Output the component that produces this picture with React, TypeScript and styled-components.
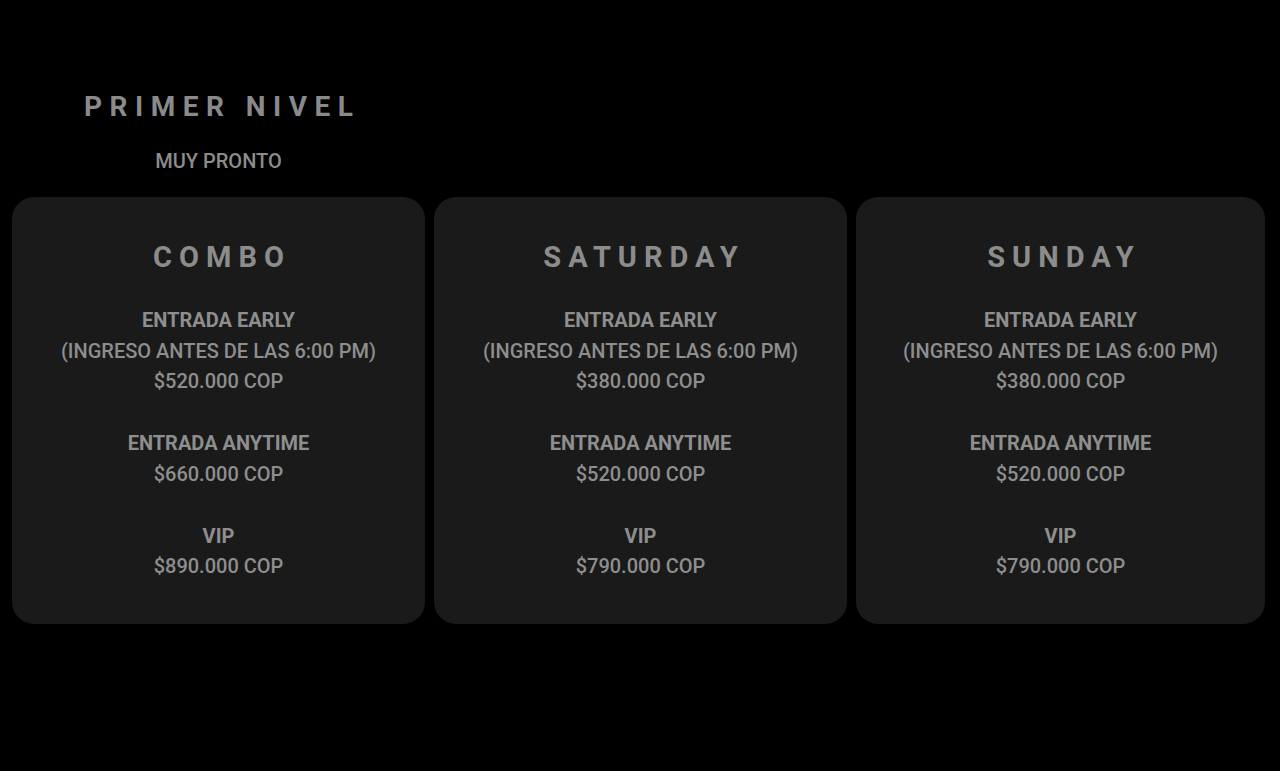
import styled, { createGlobalStyle } from 'styled-components';

const GlobalStyle = createGlobalStyle`
  html, body {
    margin: 0;
    padding: 0;
    background: #000;
  }
  body {
    font-family: Roboto, "Liberation Sans", Arial, sans-serif;
  }
`;

const Page = styled.div`
  width: 1280px;
  height: 771px;
  background: #000;
  padding: 0 15px 0 12px;
  box-sizing: border-box;
`;

const Header = styled.div`
  width: 413px;
  padding-top: 91px;
  display: flex;
  flex-direction: column;
  align-items: center;
`;

const Title = styled.h1`
  margin: 0;
  font-weight: 700;
  font-size: 28px;
  line-height: 32px;
  letter-spacing: 7.5px;
  padding-left: 7.5px;
  color: #8a8a8a;
`;

const Subtitle = styled.p`
  margin: 26px 0 0;
  font-size: 20px;
  line-height: 24px;
  font-weight: 500;
  color: #8c8c8c;
`;

const Cards = styled.div`
  margin-top: 24px;
  display: grid;
  grid-template-columns: 413px 413px 1fr;
  gap: 9px;
`;

const Card = styled.section`
  background: #1a1a1a;
  border-radius: 22px;
  padding: 44px 16px 42px;
  display: flex;
  flex-direction: column;
  align-items: center;
  text-align: center;
`;

const CardTitle = styled.h2`
  margin: 0 0 32px;
  font-weight: 700;
  font-size: 29px;
  line-height: 32px;
  letter-spacing: 7px;
  padding-left: 7px;
  color: #8c8c8c;
`;

const Tier = styled.div`
  & + & {
    margin-top: 31px;
  }
`;

const Line = styled.div<{ $bold?: boolean }>`
  font-size: 20px;
  line-height: 30.7px;
  font-weight: ${({ $bold }) => ($bold ? 700 : 500)};
  color: #8e8e8e;
`;

type TierData = { name: string; note?: string; price: string };

const data: { title: string; tiers: TierData[] }[] = [
  {
    title: 'COMBO',
    tiers: [
      { name: 'ENTRADA EARLY', note: '(INGRESO ANTES DE LAS 6:00 PM)', price: '$520.000 COP' },
      { name: 'ENTRADA ANYTIME', price: '$660.000 COP' },
      { name: 'VIP', price: '$890.000 COP' },
    ],
  },
  {
    title: 'SATURDAY',
    tiers: [
      { name: 'ENTRADA EARLY', note: '(INGRESO ANTES DE LAS 6:00 PM)', price: '$380.000 COP' },
      { name: 'ENTRADA ANYTIME', price: '$520.000 COP' },
      { name: 'VIP', price: '$790.000 COP' },
    ],
  },
  {
    title: 'SUNDAY',
    tiers: [
      { name: 'ENTRADA EARLY', note: '(INGRESO ANTES DE LAS 6:00 PM)', price: '$380.000 COP' },
      { name: 'ENTRADA ANYTIME', price: '$520.000 COP' },
      { name: 'VIP', price: '$790.000 COP' },
    ],
  },
];

export default function App() {
  return (
    <>
      <GlobalStyle />
      <Page>
        <Header>
          <Title>PRIMER NIVEL</Title>
          <Subtitle>MUY PRONTO</Subtitle>
        </Header>
        <Cards>
          {data.map((card) => (
            <Card key={card.title}>
              <CardTitle>{card.title}</CardTitle>
              {card.tiers.map((tier) => (
                <Tier key={tier.name}>
                  <Line $bold>{tier.name}</Line>
                  {tier.note && <Line>{tier.note}</Line>}
                  <Line>{tier.price}</Line>
                </Tier>
              ))}
            </Card>
          ))}
        </Cards>
      </Page>
    </>
  );
}
